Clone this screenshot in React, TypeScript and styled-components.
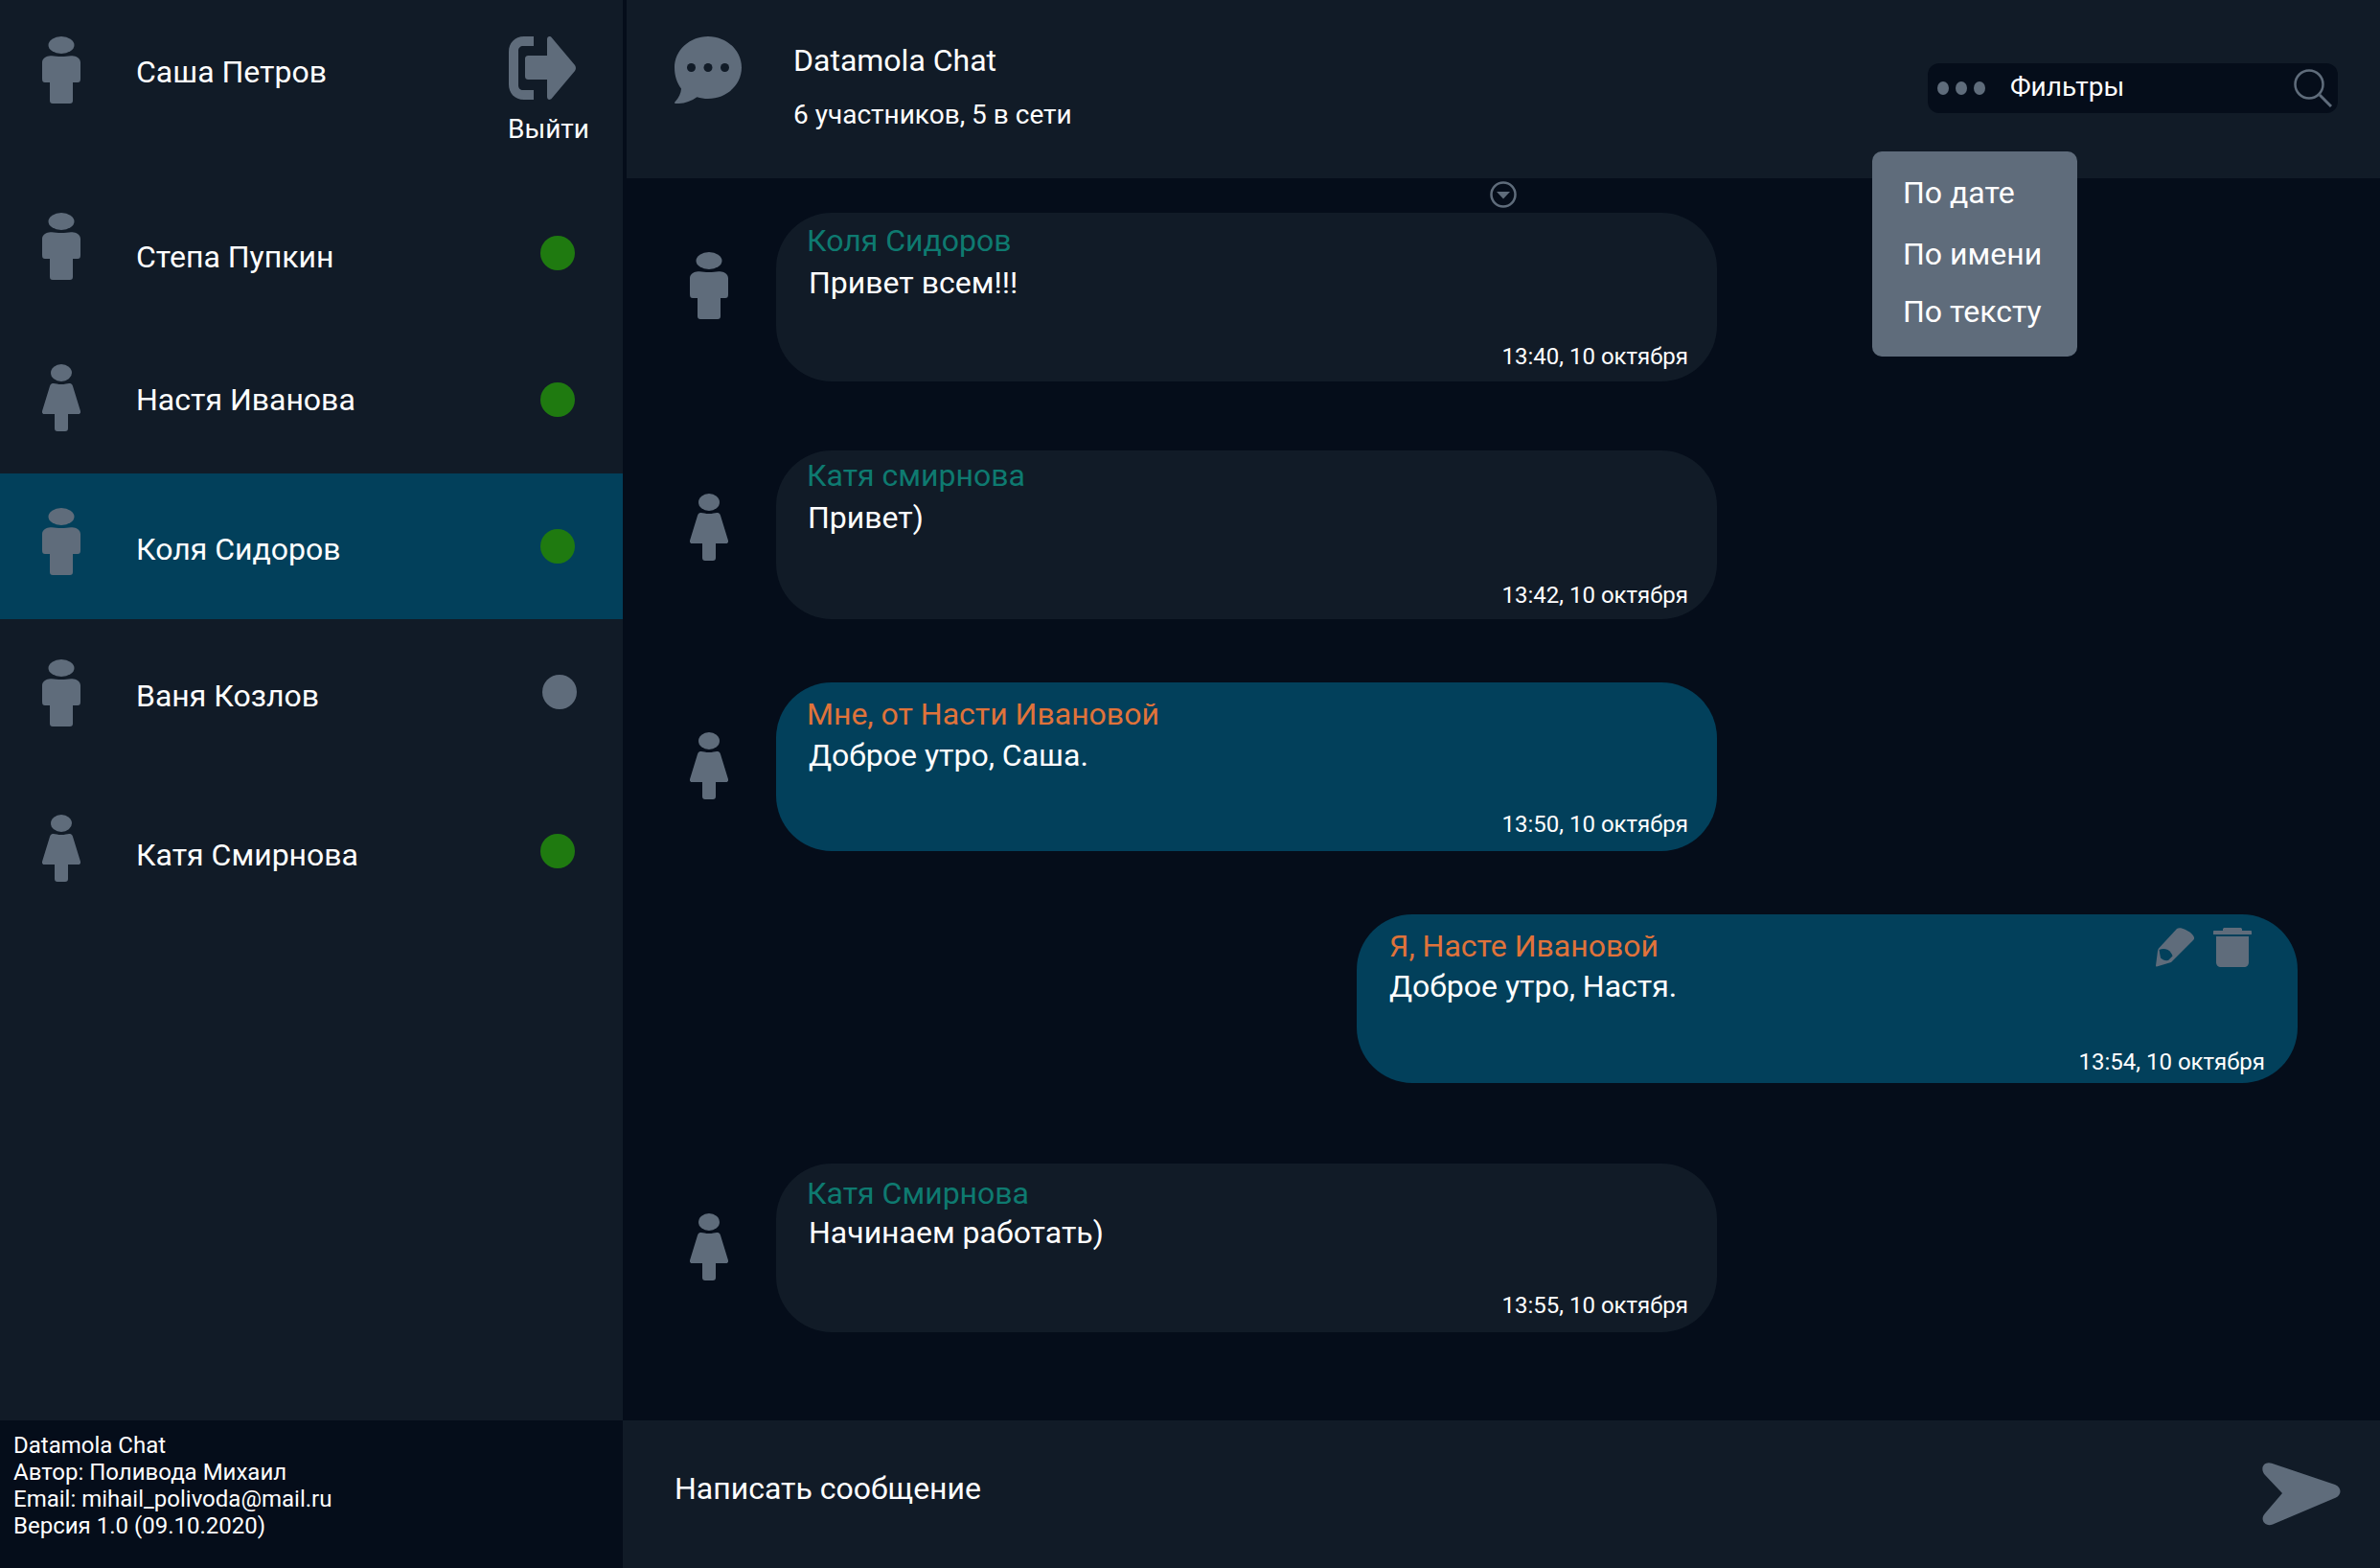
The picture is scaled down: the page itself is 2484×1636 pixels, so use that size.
import styled, { createGlobalStyle } from 'styled-components';

const PANEL = '#111b27';
const DARK = '#050d1a';
const ACTIVE = '#02405b';
const GREY = '#5f6c7b';

const GlobalStyle = createGlobalStyle`
    html, body {
        margin: 0;
        padding: 0;
        width: 2484px;
        height: 1636px;
        overflow: hidden;
        background: ${DARK};
        font-family: Roboto, "Liberation Sans", sans-serif;
        color: #fff;
    }
`

const Man = () => (
    <svg width="40" height="70" viewBox="0 0 40 70" fill={GREY}>
        <ellipse cx="20" cy="9" rx="13.5" ry="9" />
        <path d="M7 20.5c4-1 8 .5 13 .5s9-1.5 13-.5c4 .8 7 3 7 7V44c0 3-1 4-3 4h-5v19c0 2-1 3-3 3H11c-2 0-3-1-3-3V48H3c-2 0-3-1-3-4V27.5c0-4 3-6.200 7-7z" />
    </svg>
)

const Woman = () => (
    <svg width="40" height="70" viewBox="0 0 40 70" fill={GREY}>
        <ellipse cx="20" cy="9" rx="11" ry="9" />
        <path d="M11 20c2-.5 5 1 9 1s7-1.5 9-1c1.5.3 2.5 1.200 3 3l8 26c.4 1.5-.4 3-2 3H27v15c0 2-1 3-3 3h-8c-2 0-3-1-3-3V52H2c-1.600 0-2.400-1.500-2-3L8 23c.5-1.800 1.500-2.700 3-3z" />
    </svg>
)

const Avatar = ({ kind }: { kind: 'man' | 'woman' }) => (kind === 'man' ? <Man /> : <Woman />)

const users = [
    { name: 'Степа Пупкин', kind: 'man', online: true, height: 154, shift: -6, nameShift: 5, dotShift: 1 },
    { name: 'Настя Иванова', kind: 'woman', online: true, height: 154, shift: -2, nameShift: 0, dotShift: 0 },
    { name: 'Коля Сидоров', kind: 'man', online: true, height: 152, shift: -5, nameShift: 3, dotShift: 0, active: true },
    { name: 'Ваня Козлов', kind: 'man', online: false, height: 154, shift: 0, nameShift: 3, dotShift: -1 },
    { name: 'Катя Смирнова', kind: 'woman', online: true, height: 170, shift: 0, nameShift: 7, dotShift: 3 },
] as const

const messages = [
    { from: 'Коля Сидоров', text: 'Привет всем!!!', time: '13:40, 10 октября', kind: 'man', top: 36, avatar: 41, pad: 7, textGap: 1, indent: 1, timeBottom: 12 },
    { from: 'Катя смирнова', text: 'Привет)', time: '13:42, 10 октября', kind: 'woman', top: 72, avatar: 45, pad: 4, textGap: 1, indent: 0, timeBottom: 11 },
    { from: 'Мне, от Насти Ивановой', text: 'Доброе утро, Саша.', time: '13:50, 10 октября', kind: 'woman', top: 66, avatar: 52, pad: 11, textGap: 0, indent: 1, timeBottom: 14, personal: true },
    { from: 'Я, Насте Ивановой', text: 'Доброе утро, Настя.', time: '13:54, 10 октября', top: 66, pad: 11, textGap: -1, indent: 1, timeBottom: 8, own: true, personal: true },
    { from: 'Катя Смирнова', text: 'Начинаем работать)', time: '13:55, 10 октября', kind: 'woman', top: 84, avatar: 52, pad: 9, textGap: -2, indent: 1, timeBottom: 14 },
] as const

export default function App() {
    return (
        <>
            <GlobalStyle />
            <Page>
                <Sidebar>
                    <Profile>
                        <Avatar kind="man" />
                        <ProfileName>Саша Петров</ProfileName>
                        <Logout>
                            <svg width="70" height="66" viewBox="0 0 70 66" fill={GREY}>
                                <path d="M26 0v10H15c-3 0-5 2-5 5v36c0 3 2 5 5 5h11v10H16C6 66 0 59 0 50V16C0 7 6 0 16 0z" />
                                <path d="M40 3c0-3 3-4 5-1.500L69 30c1.300 1.800 1.300 4 0 6L45 64.500c-2 2.500-5 1.500-5-1.500V45H21c-3 0-4-1-4-4V24c0-3 1-4 4-4h19z" />
                            </svg>
                            <LogoutLabel>Выйти</LogoutLabel>
                        </Logout>
                    </Profile>
                    {users.map((user) => (
                        <UserRow key={user.name} $height={user.height} $active={'active' in user} $shift={user.shift}>
                            <Avatar kind={user.kind} />
                            <UserName $shift={user.nameShift}>{user.name}</UserName>
                            <StatusDot $online={user.online} $shift={user.dotShift} />
                        </UserRow>
                    ))}
                    <Credits>
                        <div>Datamola Chat</div>
                        <div>Автор: Поливода Михаил</div>
                        <div>Email: mihail_polivoda@mail.ru</div>
                        <div>Версия 1.0 (09.10.2020)</div>
                    </Credits>
                </Sidebar>

                <Main>
                    <Header>
                        <ChatIcon width="70" height="70" viewBox="0 0 70 70">
                            <path fill={GREY} d="M35 0c19.300 0 35 14.600 35 32.500S54.300 65 35 65c-4 0-8-.6-11.600-1.800C17 68 8 70.500 1 70c-1.200-.1-1.300-1-.5-1.800C4.500 64 6.800 59 7 54.500 2.600 48.800 0 41 0 32.500 0 14.600 15.700 0 35 0z" />
                            <circle cx="17.5" cy="32.5" r="4.5" fill={PANEL} />
                            <circle cx="35" cy="32.5" r="4.5" fill={PANEL} />
                            <circle cx="52.5" cy="32.5" r="4.5" fill={PANEL} />
                        </ChatIcon>
                        <ChatInfo>
                            <ChatTitle>Datamola Chat</ChatTitle>
                            <ChatSubtitle>6 участников, 5 в сети</ChatSubtitle>
                        </ChatInfo>
                        <FilterBar>
                            <Dots>
                                <Dot />
                                <Dot />
                                <Dot />
                            </Dots>
                            <FilterLabel>Фильтры</FilterLabel>
                            <svg width="40" height="40" viewBox="0 0 40 40" fill="none" stroke={GREY}>
                                <circle cx="16" cy="16" r="14.5" strokeWidth="2.5" />
                                <path d="M27 27l12 12" strokeWidth="3" />
                            </svg>
                        </FilterBar>
                        <FilterMenu>
                            <FilterItem>По дате</FilterItem>
                            <FilterItem>По имени</FilterItem>
                            <FilterItem>По тексту</FilterItem>
                        </FilterMenu>
                    </Header>

                    <Feed>
                        <MoreButton>
                            <svg width="28" height="28" viewBox="0 0 28 28">
                                <circle cx="14" cy="14" r="12.5" fill="none" stroke={GREY} strokeWidth="2.5" />
                                <path d="M7 11h14l-7 7.500z" fill={GREY} />
                            </svg>
                        </MoreButton>
                        {messages.map((message) => (
                            <MessageRow key={message.time} $top={message.top} $own={'own' in message}>
                                {'kind' in message && (
                                    <MessageAvatar $top={message.avatar}>
                                        <Avatar kind={message.kind} />
                                    </MessageAvatar>
                                )}
                                <Bubble $personal={'personal' in message} $pad={message.pad}>
                                    {'own' in message && (
                                        <BubbleTools>
                                            <svg width="40" height="41" viewBox="0 0 40 41" fill={GREY}>
                                                <path d="M22 1c2-1.500 5-1 9 1 5 2.500 8 5 9 8 .3 1 0 2-1 3L16 36 1 40.500c-.7.200-1-.2-1-1L2 24c.1-1 .5-1.500 1-2.500z" />
                                                <path d="M3.500 23c3-1.500 6-1.500 9 0 2.500 1.500 4.500 4 5 6.500L13 34c-3 .5-6-.5-8-2.500z" fill={ACTIVE} />
                                            </svg>
                                            <svg width="40" height="41" viewBox="0 0 40 41" fill={GREY}>
                                                <path d="M10 1.500C10 .5 11 0 12 0h16c1 0 2 .5 2 1.500V3h9c.6 0 1 .4 1 1v3H0V4c0-.6.4-1 1-1h9z" />
                                                <path d="M3 9h34v27c0 3-2 5-5 5H8c-3 0-5-2-5-5z" />
                                            </svg>
                                        </BubbleTools>
                                    )}
                                    <Sender $personal={'personal' in message} $own={'own' in message}>{message.from}</Sender>
                                    <MessageText $gap={message.textGap} $indent={message.indent}>{message.text}</MessageText>
                                    <MessageTime $bottom={message.timeBottom} $own={'own' in message}>{message.time}</MessageTime>
                                </Bubble>
                            </MessageRow>
                        ))}
                    </Feed>

                    <Composer>
                        <Placeholder>Написать сообщение</Placeholder>
                        <svg width="82" height="66" viewBox="0 0 82 66" fill={GREY}>
                            <path d="M10 .8L76 23c7 2.500 7.500 11 .5 13.800L11 64.500c-8 3-14-5-8-11.500L21 32 3 13C-3 6 2-1.800 10 .8z" />
                        </svg>
                    </Composer>
                </Main>
            </Page>
        </>
    )
}

const Page = styled.div`
    display: flex;
    width: 2484px;
    height: 1636px;
`

const Sidebar = styled.aside`
    display: flex;
    flex-direction: column;
    width: 650px;
    height: 100%;
    background-color: ${PANEL};
`

const Profile = styled.div`
    display: flex;
    align-items: flex-start;
    height: 186px;
    flex-shrink: 0;
    box-sizing: border-box;
    padding: 38px 35px 0 44px;
`

const ProfileName = styled.div`
    flex: 1;
    margin: 15px 0 0 58px;
    font-size: 32px;
    line-height: 44px;
`

const Logout = styled.div`
    display: flex;
    flex-direction: column;
    align-items: center;
    svg {
        margin-right: 14px;
    }
`

const LogoutLabel = styled.div`
    margin-top: 13px;
    font-size: 28px;
    line-height: 36px;
`

const UserRow = styled.div<{ $height: number; $active: boolean; $shift: number }>`
    display: flex;
    align-items: center;
    flex-shrink: 0;
    height: ${(p) => p.$height}px;
    padding: 0 50px 0 44px;
    box-sizing: border-box;
    background-color: ${(p) => (p.$active ? ACTIVE : 'transparent')};
    svg {
        margin-top: ${(p) => p.$shift * 2}px;
    }
`

const UserName = styled.div<{ $shift: number }>`
    flex: 1;
    margin: ${(p) => p.$shift * 2}px 0 0 58px;
    font-size: 32px;
    line-height: 44px;
`

const StatusDot = styled.div<{ $online: boolean; $shift: number }>`
    width: 36px;
    height: 36px;
    border-radius: 50%;
    margin: ${(p) => p.$shift * 2}px ${(p) => (p.$online ? 0 : -2)}px 0 0;
    background-color: ${(p) => (p.$online ? '#1f7a10' : GREY)};
`

const Credits = styled.div`
    margin-top: auto;
    height: 154px;
    box-sizing: border-box;
    padding: 12px 0 0 14px;
    background-color: ${DARK};
    font-size: 24px;
    line-height: 28px;
`

const Main = styled.main`
    position: relative;
    display: flex;
    flex-direction: column;
    flex: 1;
    min-width: 0;
`

const Header = styled.header`
    position: relative;
    display: flex;
    align-items: center;
    flex-shrink: 0;
    height: 186px;
    box-sizing: border-box;
    padding: 0 44px 0 50px;
    background-color: ${PANEL};
    margin-left: 4px;
    svg {
        flex-shrink: 0;
    }
`

const ChatIcon = styled.svg`
    align-self: flex-start;
    margin-top: 38px;
`

const ChatInfo = styled.div`
    flex: 1;
    margin: -7px 0 0 54px;
`

const ChatTitle = styled.div`
    font-size: 32px;
    line-height: 44px;
`

const ChatSubtitle = styled.div`
    margin-top: 17px;
    font-size: 28px;
    line-height: 36px;
`

const FilterBar = styled.div`
    display: flex;
    align-items: center;
    width: 428px;
    height: 52px;
    margin-top: -2px;
    box-sizing: border-box;
    padding: 0 6px 0 10px;
    border-radius: 12px;
    background-color: ${DARK};
`

const Dots = styled.div`
    display: flex;
    gap: 7px;
`

const Dot = styled.span`
    width: 12px;
    height: 14px;
    border-radius: 50%;
    background-color: ${GREY};
`

const FilterLabel = styled.div`
    flex: 1;
    margin: -3px 0 0 26px;
    font-size: 28px;
`

const FilterMenu = styled.div`
    position: absolute;
    top: 158px;
    left: 1300px;
    z-index: 2;
    width: 214px;
    height: 214px;
    box-sizing: border-box;
    padding: 21px 0 0 32px;
    border-radius: 10px;
    background-color: ${GREY};
`

const FilterItem = styled.div`
    height: 60px;
    font-size: 32px;
    line-height: 44px;
    &:first-child {
        height: 64px;
    }
`

const Feed = styled.div`
    position: relative;
    flex: 1;
    min-height: 0;
    padding: 0 86px 0 70px;
    background-color: ${DARK};
`

const MoreButton = styled.div`
    position: absolute;
    top: 3px;
    left: 905px;
    width: 28px;
    height: 28px;
`

const MessageRow = styled.div<{ $top: number; $own: boolean }>`
    display: flex;
    align-items: flex-start;
    justify-content: ${(p) => (p.$own ? 'flex-end' : 'flex-start')};
    margin-top: ${(p) => p.$top}px;
`

const MessageAvatar = styled.div<{ $top: number }>`
    width: 90px;
    padding-top: ${(p) => p.$top}px;
`

const Bubble = styled.div<{ $personal: boolean; $pad: number }>`
    position: relative;
    width: 982px;
    height: 176px;
    box-sizing: border-box;
    padding: ${(p) => p.$pad}px 32px 0 33px;
    border-radius: 58px;
    background-color: ${(p) => (p.$personal ? ACTIVE : PANEL)};
`

const BubbleTools = styled.div`
    position: absolute;
    top: 14px;
    right: 48px;
    display: flex;
    gap: 20px;
`

const Sender = styled.div<{ $personal: boolean; $own: boolean }>`
    margin-left: ${(p) => (p.$own ? 1 : -1)}px;
    font-size: 32px;
    line-height: 44px;
    color: ${(p) => (p.$personal ? '#e0733a' : '#0e7a70')};
`

const MessageText = styled.div<{ $gap: number; $indent: number }>`
    margin: ${(p) => p.$gap}px 0 0 ${(p) => p.$indent}px;
    font-size: 32px;
    line-height: 42px;
`

const MessageTime = styled.div<{ $bottom: number; $own: boolean }>`
    position: absolute;
    right: ${(p) => (p.$own ? 34 : 30)}px;
    bottom: ${(p) => p.$bottom}px;
    font-size: 24px;
    line-height: 28px;
`

const Composer = styled.div`
    display: flex;
    align-items: center;
    justify-content: space-between;
    flex-shrink: 0;
    height: 154px;
    box-sizing: border-box;
    padding: 0 41px 0 54px;
    background-color: ${PANEL};
`

const Placeholder = styled.div`
    margin-top: -12px;
    font-size: 32px;
    line-height: 44px;
`
